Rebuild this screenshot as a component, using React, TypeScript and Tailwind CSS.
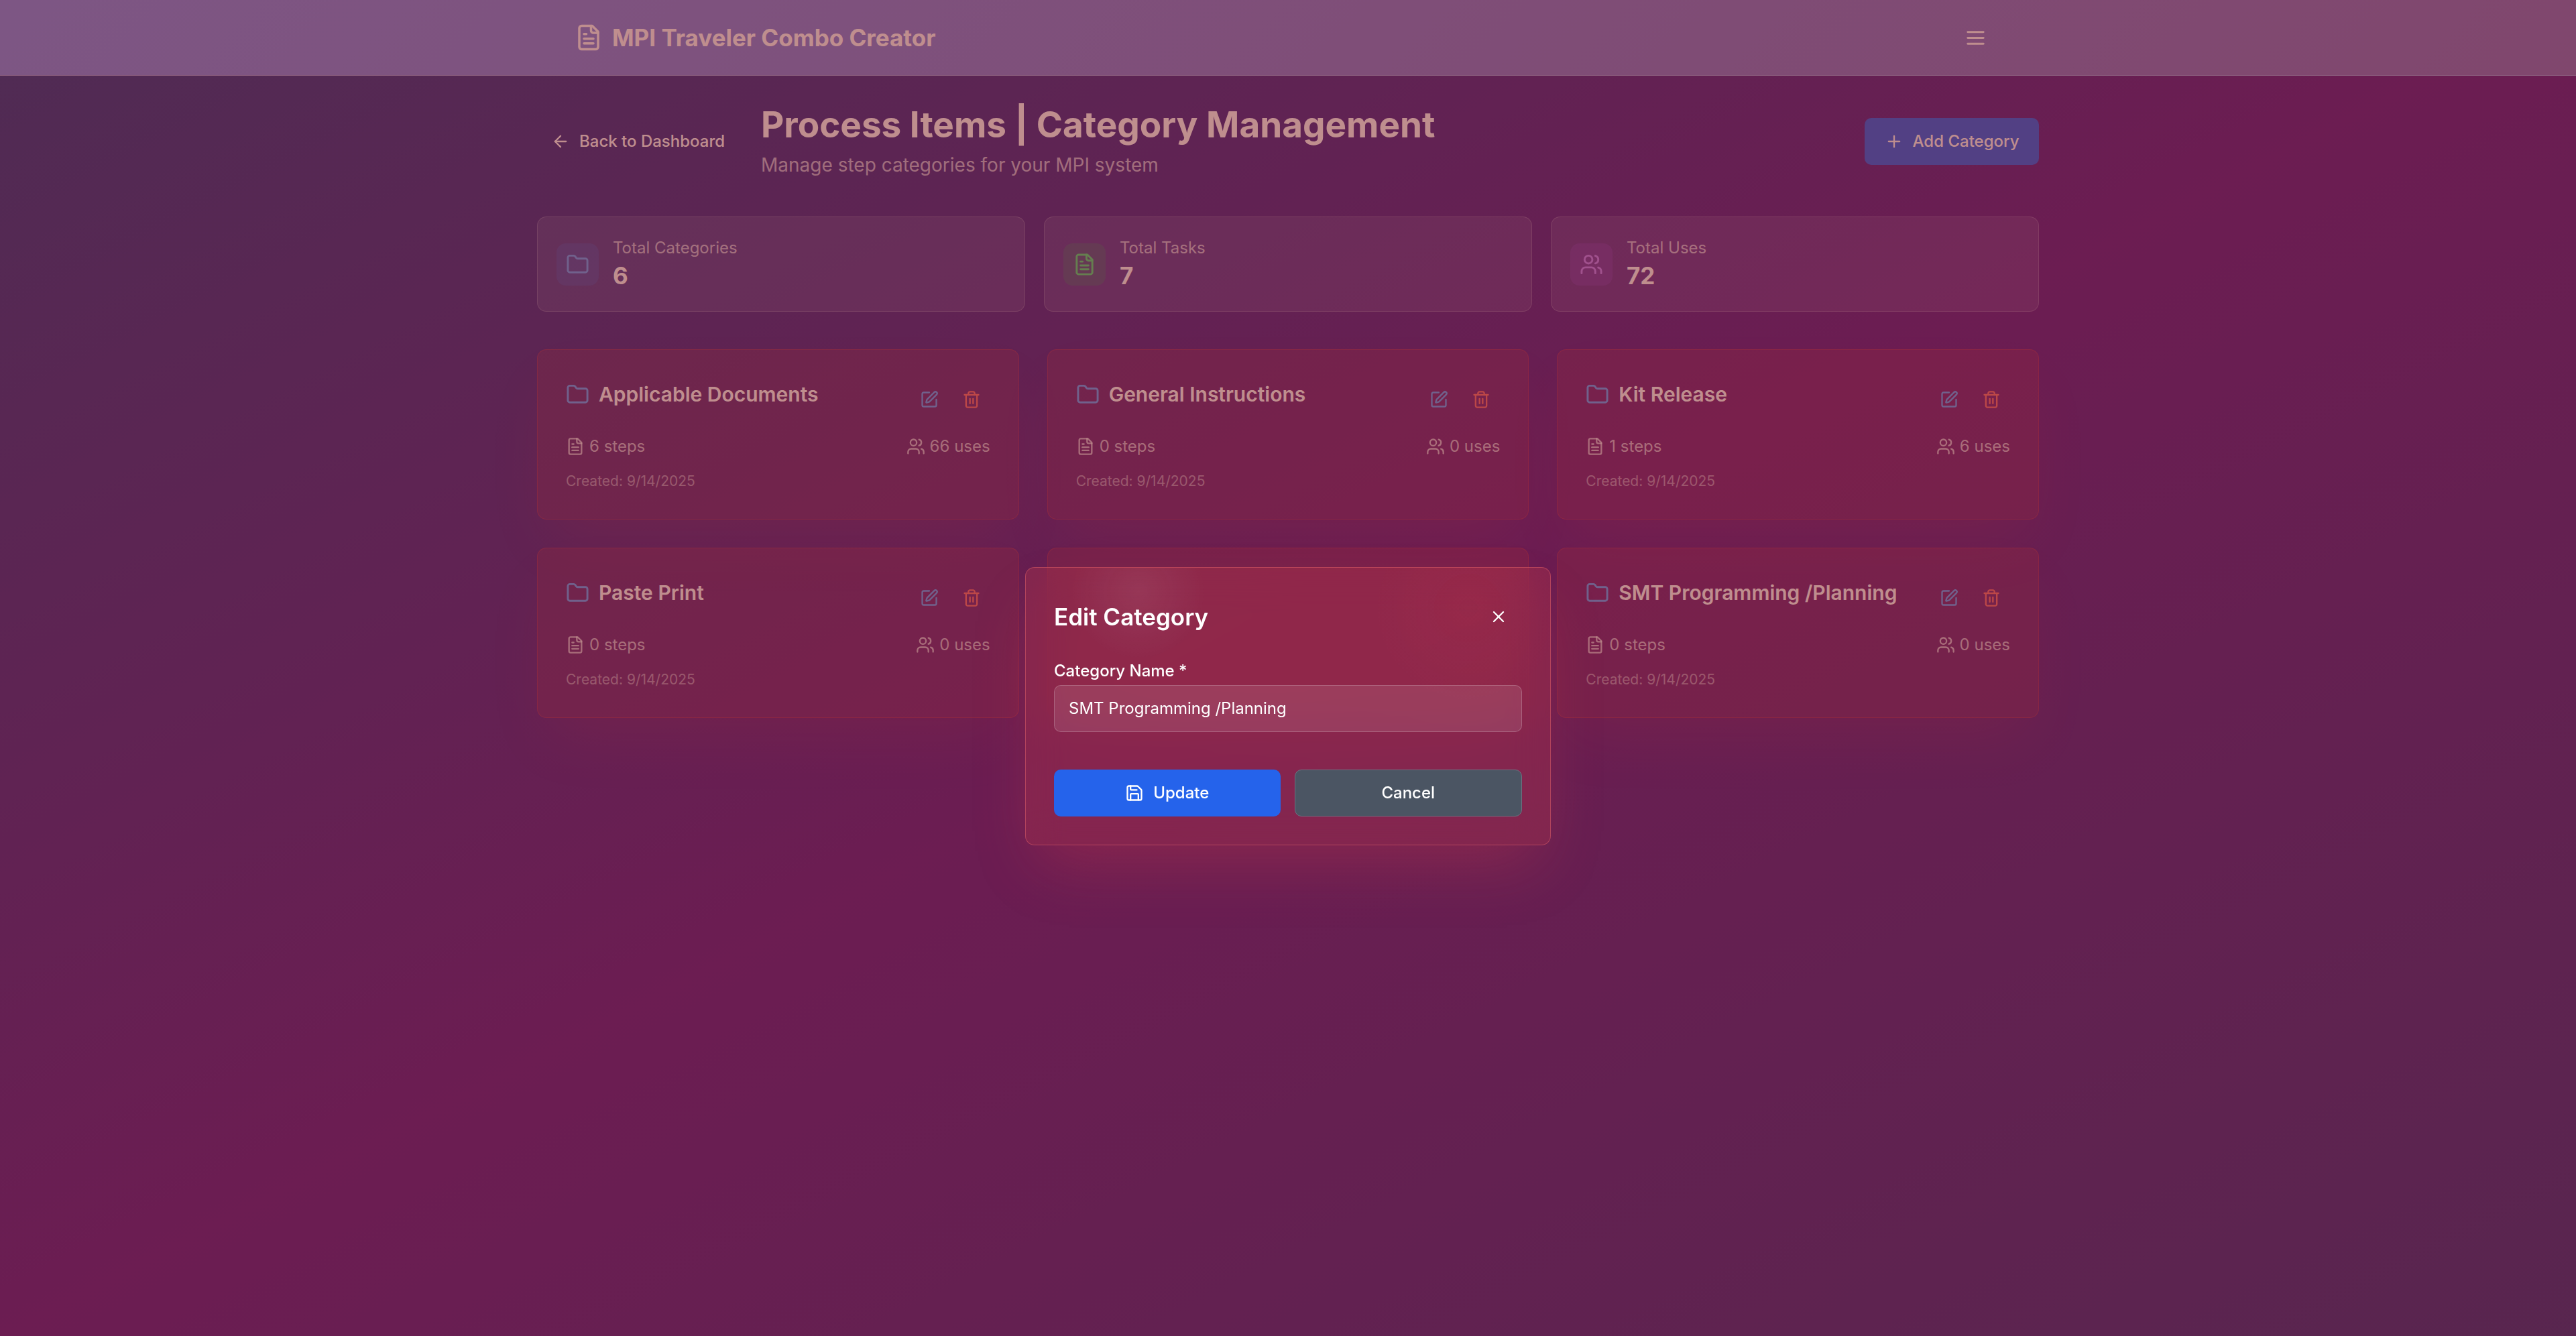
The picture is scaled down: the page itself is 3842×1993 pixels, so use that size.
import { ArrowLeft, Folder, Plus, Save, SquarePen, X } from "lucide-react";
import type { ReactNode } from "react";

type IconProps = { className?: string };

function Glyph({ className, children }: IconProps & { children: ReactNode }) {
  return (
    <svg
      viewBox="0 0 24 24"
      fill="none"
      stroke="currentColor"
      strokeWidth={2}
      strokeLinecap="round"
      strokeLinejoin="round"
      aria-hidden="true"
      className={className}
    >
      {children}
    </svg>
  );
}

function FileIcon({ className }: IconProps) {
  return (
    <Glyph className={className}>
      <path d="M15 2H6a2 2 0 0 0-2 2v16a2 2 0 0 0 2 2h12a2 2 0 0 0 2-2V7Z" />
      <path d="M14 2v4a2 2 0 0 0 2 2h4" />
      <path d="M10 9H8" />
      <path d="M16 13H8" />
      <path d="M16 17H8" />
    </Glyph>
  );
}

function UsersIcon({ className }: IconProps) {
  return (
    <Glyph className={className}>
      <path d="M16 21v-2a4 4 0 0 0-4-4H6a4 4 0 0 0-4 4v2" />
      <circle cx="9" cy="7" r="4" />
      <path d="M22 21v-2a4 4 0 0 0-3-3.87" />
      <path d="M16 3.13a4 4 0 0 1 0 7.75" />
    </Glyph>
  );
}

function TrashIcon({ className }: IconProps) {
  return (
    <Glyph className={className}>
      <path d="M3 6h18" />
      <path d="M19 6v14c0 1-1 2-2 2H7c-1 0-2-1-2-2V6" />
      <path d="M8 6V4c0-1 1-2 2-2h4c1 0 2 1 2 2v2" />
      <path d="M10 11v6" />
      <path d="M14 11v6" />
    </Glyph>
  );
}

function MenuIcon({ className }: IconProps) {
  return (
    <Glyph className={className}>
      <path d="M4 6h16" />
      <path d="M4 12h16" />
      <path d="M4 18h16" />
    </Glyph>
  );
}

type Category = { name: string; steps: number; uses: number; created: string };

const categories: (Category | null)[] = [
  { name: "Applicable Documents", steps: 6, uses: 66, created: "9/14/2025" },
  { name: "General Instructions", steps: 0, uses: 0, created: "9/14/2025" },
  { name: "Kit Release", steps: 1, uses: 6, created: "9/14/2025" },
  { name: "Paste Print", steps: 0, uses: 0, created: "9/14/2025" },
  null,
  { name: "SMT Programming /Planning", steps: 0, uses: 0, created: "9/14/2025" },
];

function Header() {
  return (
    <header className="border-b border-[#99a0e0] bg-[linear-gradient(135deg,#7b8feb,#8170bd)]">
      <div className="mx-auto flex h-28 w-full max-w-[2240px] items-center justify-between px-14">
        <div className="flex items-center gap-3.5">
          <FileIcon className="size-[42px]" />
          <span className="text-[35px] leading-[49px] font-bold">MPI Traveler Combo Creator</span>
        </div>
        <button type="button" aria-label="Open menu" className="px-[21px] py-3.5">
          <MenuIcon className="size-[35px]" />
        </button>
      </div>
    </header>
  );
}

function StatCard({ label, value, tint, children }: { label: string; value: number; tint: string; children: ReactNode }) {
  return (
    <div className="flex items-center gap-[21px] rounded-[14px] border border-white/20 bg-white/10 p-7">
      <div className={`rounded-[14px] p-3.5 ${tint}`}>{children}</div>
      <div>
        <p className="text-[24px] leading-[35px] text-white/70">{label}</p>
        <p className="text-[35px] leading-[49px] font-bold">{value}</p>
      </div>
    </div>
  );
}

function CardShell({ children }: { children?: ReactNode }) {
  return (
    <article className="rounded-[14px] border border-[#ef4444]/30 bg-[#ef4444]/18 p-[42px] shadow-[0_44px_88px_-21px_rgba(239,68,68,0.15)]">
      {children}
    </article>
  );
}

function CategoryCard({ name, steps, uses, created }: Category) {
  return (
    <CardShell>
      <div className="flex items-start justify-between">
        <div className="flex items-center gap-3.5">
          <Folder className="size-[35px] text-[#60a5fa]" />
          <h2 className="text-[30px] leading-[49px] font-semibold">{name}</h2>
        </div>
        <div className="flex gap-[7px]">
          <button type="button" aria-label={`Edit ${name}`} className="flex h-[63px] w-14 items-center justify-center text-[#60a5fa]">
            <SquarePen className="size-7" />
          </button>
          <button type="button" aria-label={`Delete ${name}`} className="flex h-[63px] w-14 items-center justify-center text-[#f87171]">
            <TrashIcon className="size-7" />
          </button>
        </div>
      </div>
      <div className="mt-[21px] flex justify-between text-[24px] leading-[35px] text-white/70">
        <span className="flex items-center gap-[7px]">
          <FileIcon className="size-7" />
          {steps} steps
        </span>
        <span className="flex items-center gap-[7px]">
          <UsersIcon className="size-7" />
          {uses} uses
        </span>
      </div>
      <p className="mt-[21px] text-[21px] leading-7 text-white/50">Created: {created}</p>
    </CardShell>
  );
}

function EditDialog() {
  return (
    <div className="fixed inset-0 flex items-center justify-center bg-[#7f1d1d]/50 pt-[113px]">
      <div
        role="dialog"
        aria-modal="true"
        aria-labelledby="dialog-title"
        className="w-full max-w-[784px] rounded-[14px] border border-[#f87171]/40 bg-[#ef4444]/20 bg-[radial-gradient(circle_at_168px_36px,rgba(255,255,255,0.07),transparent_100px),radial-gradient(circle_at_660px_60px,rgba(239,68,68,0.06),transparent_140px)] p-[42px] shadow-[0_44px_88px_-21px_rgba(239,68,68,0.25)] backdrop-blur-[28px]"
      >
        <div className="mb-7 flex items-center justify-between">
          <h2 id="dialog-title" className="text-[35px] leading-[49px] font-semibold">
            Edit Category
          </h2>
          <button type="button" aria-label="Close" className="flex h-[63px] items-center px-[21px]">
            <X className="size-7" />
          </button>
        </div>
        <form onSubmit={(event) => event.preventDefault()}>
          <label htmlFor="category-name" className="block text-[24px] leading-[42px] font-medium">
            Category Name *
          </label>
          <input
            id="category-name"
            type="text"
            defaultValue="SMT Programming /Planning"
            className="h-[70px] w-full rounded-[10px] border border-white/20 bg-white/10 px-[21px] text-[24px] outline-none"
          />
          <div className="mt-14 flex gap-[21px]">
            <button
              type="submit"
              className="flex h-[70px] flex-1 items-center justify-center gap-3.5 rounded-[10px] bg-[#2563eb] text-[24px] font-medium"
            >
              <Save className="size-7" />
              Update
            </button>
            <button
              type="button"
              className="flex h-[70px] flex-1 items-center justify-center rounded-[10px] border border-[#6b7280] bg-[#4b5563] text-[24px] font-medium"
            >
              Cancel
            </button>
          </div>
        </form>
      </div>
    </div>
  );
}

export default function App() {
  return (
    <div className="min-h-screen bg-[linear-gradient(to_bottom_right,#1e3a8a,#581c87,#312e81)] font-['Inter',sans-serif] text-white">
      <Header />
      <main className="mx-auto w-full max-w-[2240px] py-[42px]">
        <div className="mb-14 flex items-center justify-between">
          <div className="flex items-center gap-7">
            <a href="#dashboard" className="flex h-[70px] w-[306px] items-center gap-3.5 px-[21px] text-[24px] font-medium">
              <ArrowLeft className="size-7" />
              Back to Dashboard
            </a>
            <div>
              <h1 className="text-[53px] leading-[63px] font-bold">Process Items | Category Management</h1>
              <p className="mt-[7px] text-[28px] leading-[42px] text-white/70">Manage step categories for your MPI system</p>
            </div>
          </div>
          <button type="button" className="flex h-[70px] w-[260px] items-center justify-center gap-3.5 rounded-[10px] bg-[#2563eb] text-[24px] font-medium">
            <Plus className="size-7" />
            Add Category
          </button>
        </div>
        <section aria-label="Totals" className="mb-14 grid grid-cols-3 gap-7">
          <StatCard label="Total Categories" value={6} tint="bg-[#3b82f6]/20">
            <Folder className="size-[35px] text-[#60a5fa]" />
          </StatCard>
          <StatCard label="Total Tasks" value={7} tint="bg-[#22c55e]/20">
            <FileIcon className="size-[35px] text-[#4ade80]" />
          </StatCard>
          <StatCard label="Total Uses" value={72} tint="bg-[#a855f7]/20">
            <UsersIcon className="size-[35px] text-[#c084fc]" />
          </StatCard>
        </section>
        <section aria-label="Categories" className="grid grid-cols-3 gap-[42px]">
          {categories.map((category, index) =>
            category ? <CategoryCard key={index} {...category} /> : <CardShell key={index} />,
          )}
        </section>
      </main>
      <EditDialog />
    </div>
  );
}
